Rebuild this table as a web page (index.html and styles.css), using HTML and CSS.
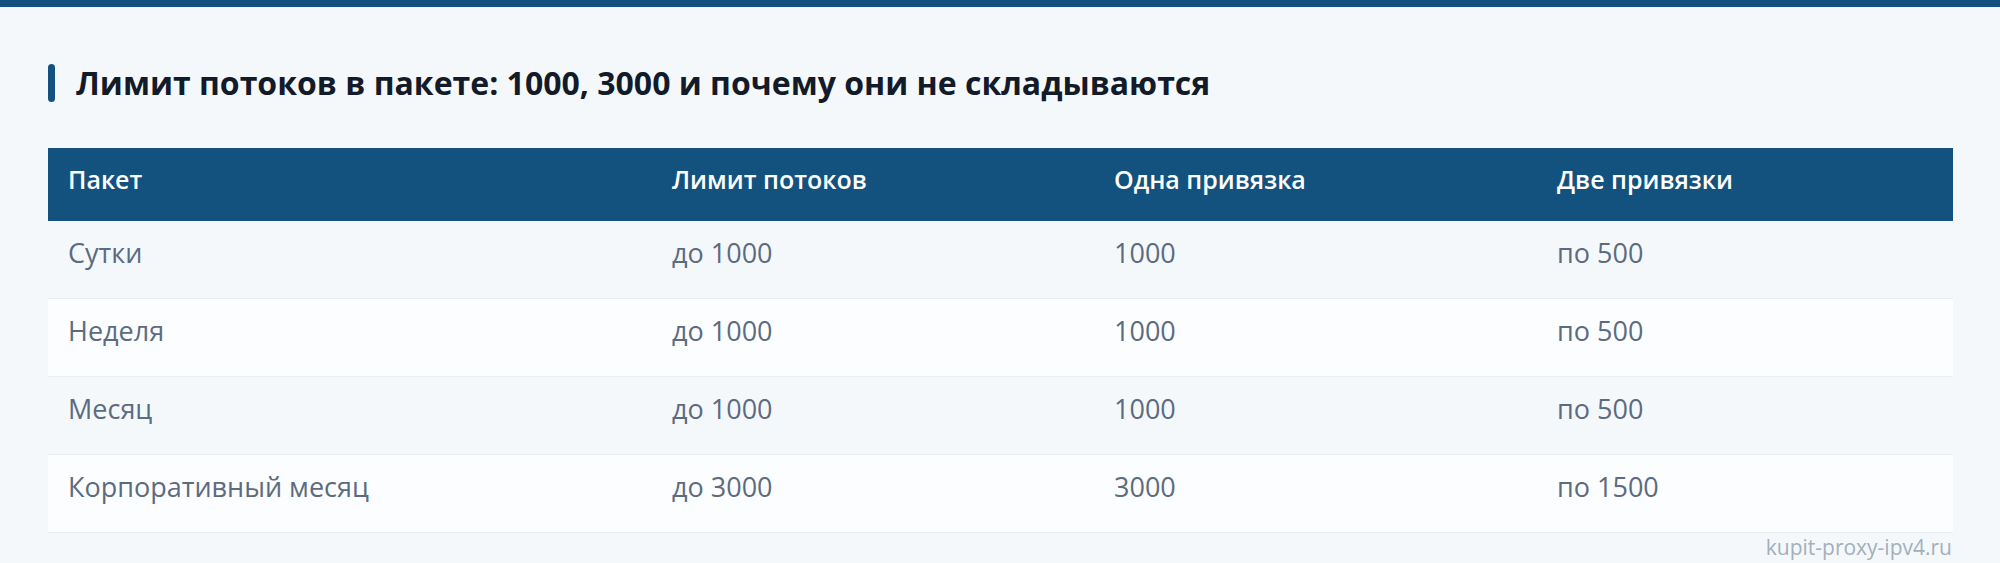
FILE: index.html
```html
<!DOCTYPE html>
<html lang="ru">
<head>
<meta charset="utf-8">
<link rel="stylesheet" href="styles.css">
</head>
<body>
<div class="topbar"></div>
<main class="page">
  <h2 class="title">Лимит потоков в пакете: 1000, 3000 и почему они не складываются</h2>
  <table class="grid">
    <colgroup>
      <col class="c1"><col class="c2"><col class="c3"><col class="c4">
    </colgroup>
    <thead>
      <tr><th>Пакет</th><th>Лимит потоков</th><th>Одна привязка</th><th>Две привязки</th></tr>
    </thead>
    <tbody>
      <tr><td>Сутки</td><td>до 1000</td><td>1000</td><td>по 500</td></tr>
      <tr><td>Неделя</td><td>до 1000</td><td>1000</td><td>по 500</td></tr>
      <tr><td>Месяц</td><td>до 1000</td><td>1000</td><td>по 500</td></tr>
      <tr><td>Корпоративный месяц</td><td>до 3000</td><td>3000</td><td>по 1500</td></tr>
    </tbody>
  </table>
  <div class="mark">kupit-proxy-ipv4.ru</div>
</main>
</body>
</html>
```

FILE: styles.css
```css
html, body {
  margin: 0;
  padding: 0;
  background: #f5f8fb;
  font-family: "Open Sans", "Noto Sans", sans-serif;
}
.topbar {
  height: 7px;
  background: #13527e;
}
.page {
  padding: 0 48px;
}
.title {
  margin: 57px 0 0;
  display: flex;
  align-items: center;
  gap: 21px;
  font-size: 32px;
  font-weight: 700;
  color: #131b2a;
  line-height: 38px;
}
.title::before {
  content: "";
  flex: none;
  width: 7px;
  height: 38px;
  border-radius: 4px;
  background: #13527e;
}
.grid {
  margin-top: 46px;
  width: 100%;
  border-collapse: collapse;
  table-layout: fixed;
}
.c1 { width: 604px; }
.c2 { width: 442px; }
.c3 { width: 443px; }
.c4 { width: 416px; }
.grid th {
  background: #13527e;
  color: #ffffff;
  font-size: 25px;
  font-weight: 600;
  text-align: left;
  vertical-align: top;
  line-height: 34px;
  padding: 14px 20px 25px;
}
.grid td {
  font-size: 27px;
  line-height: 36px;
  vertical-align: top;
  padding: 14px 20px 27px;
  color: #5b6b80;
  border-bottom: 1px solid #e9eef3;
}
.grid tbody tr:nth-child(odd) td { background: #f5f8fb; }
.grid tbody tr:nth-child(even) td { background: #fcfdfe; }
.mark {
  text-align: right;
  color: #a3afbb;
  font-size: 21px;
  line-height: 26px;
  margin-top: 1px;
}
```
